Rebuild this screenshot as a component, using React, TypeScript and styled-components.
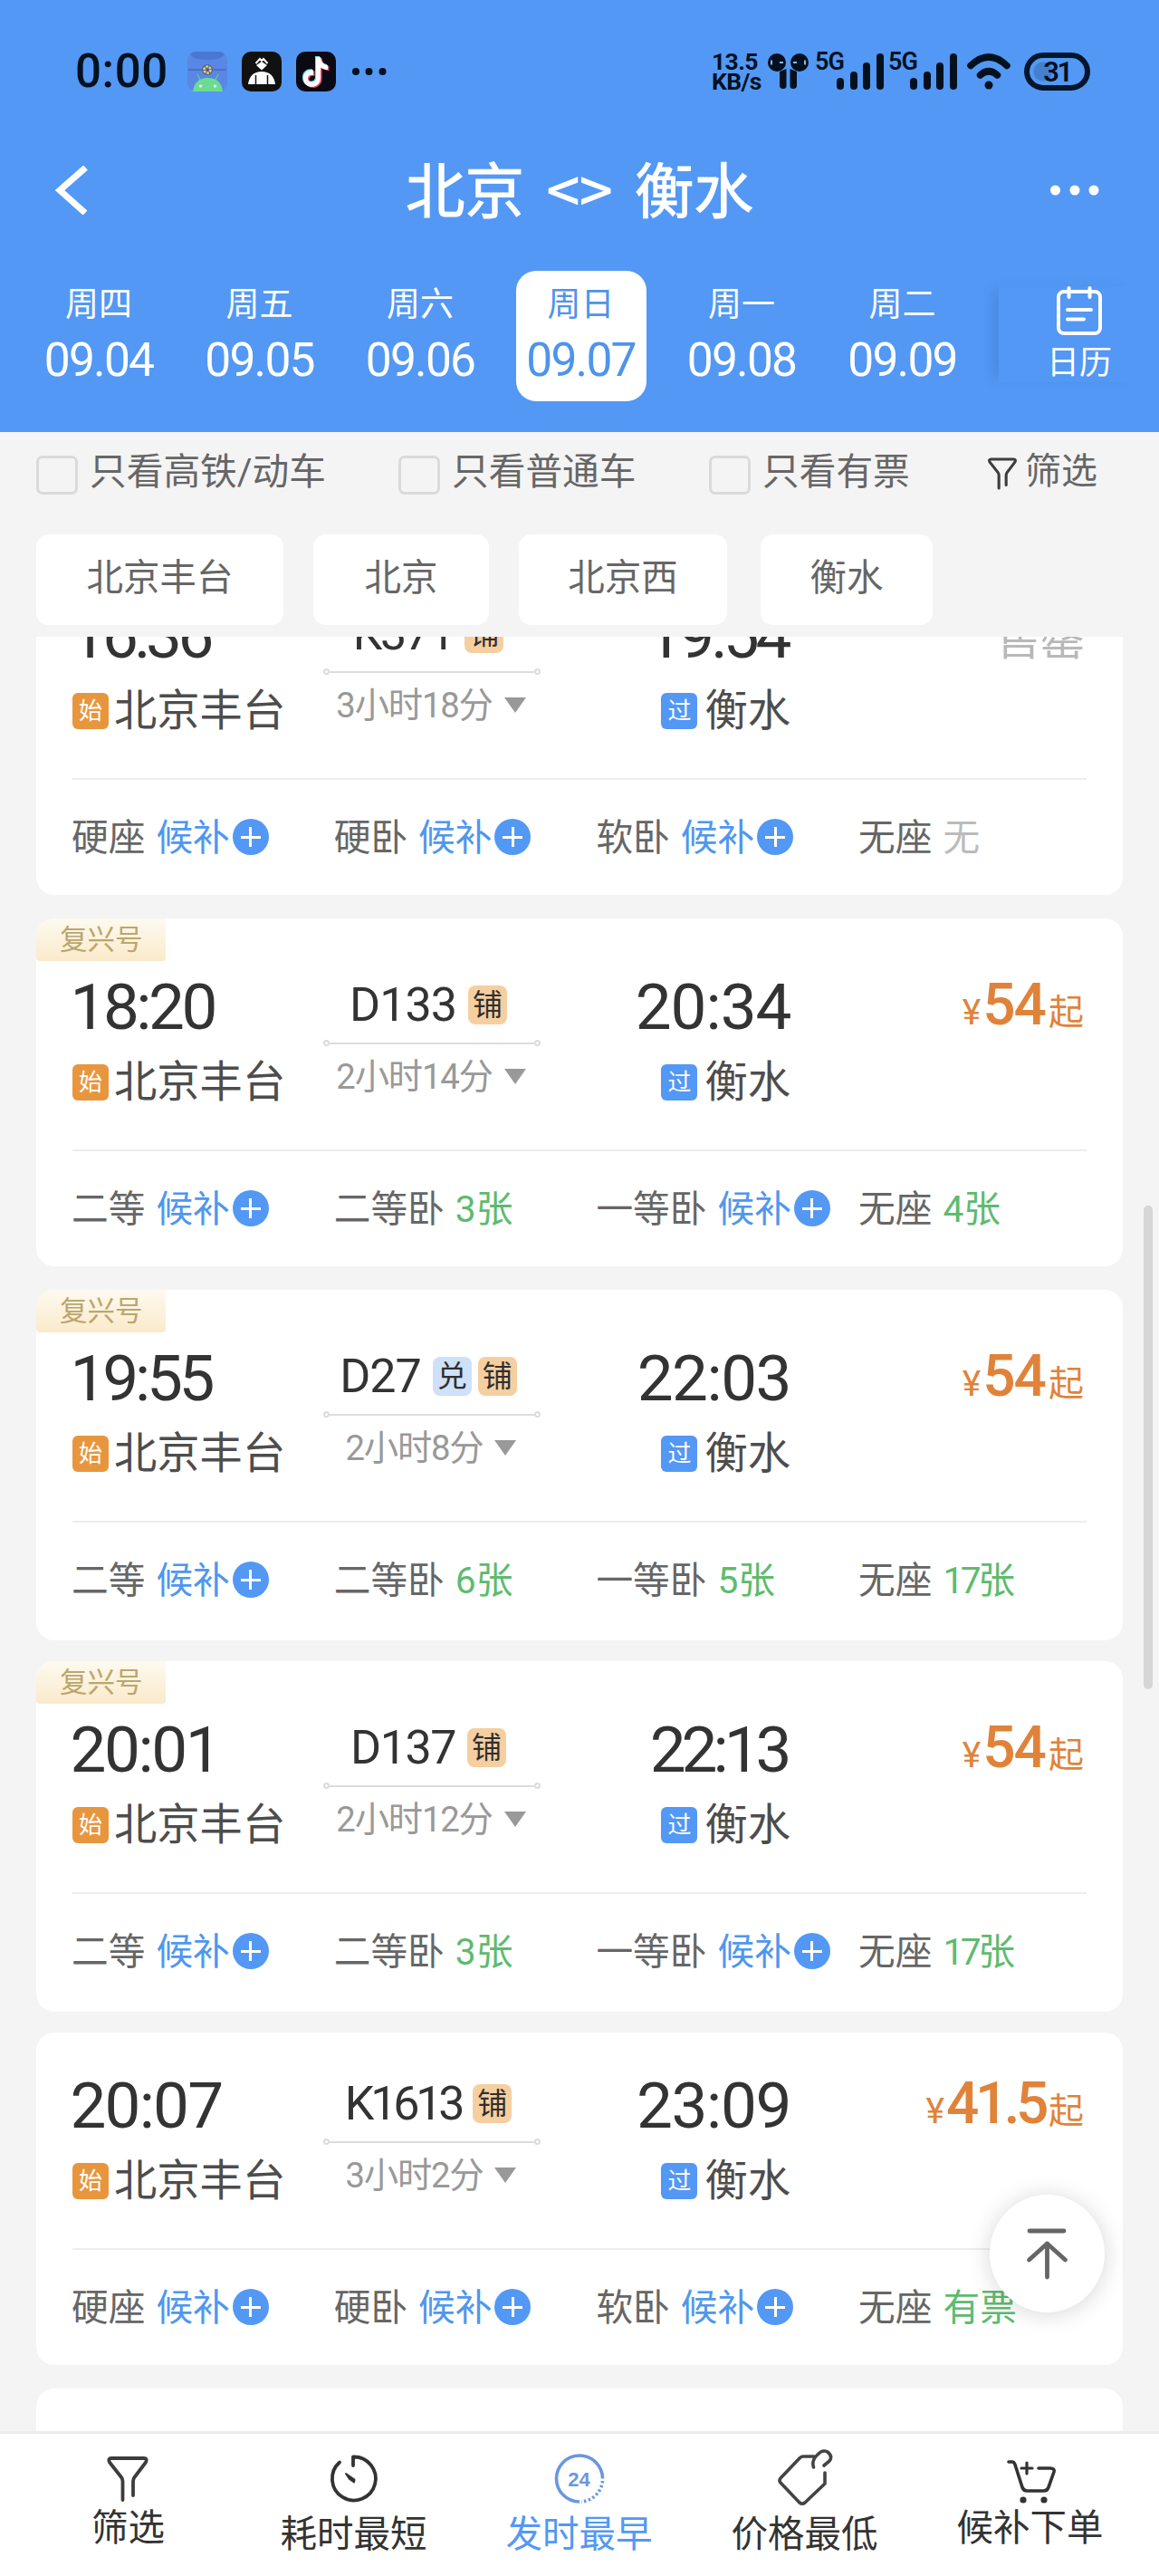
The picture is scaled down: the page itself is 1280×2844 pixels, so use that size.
import React from "react";
import styled, { createGlobalStyle } from "styled-components";

const BLUE = "#5398f4";
const GREEN = "#5dbb6e";

const GlobalStyle = createGlobalStyle`
  * { box-sizing: border-box; }
  body {
    margin: 0;
    background: #f4f4f4;
    font-family: Roboto, "Noto Sans CJK SC", sans-serif;
    color: #333;
  }
  svg { display: block; flex: none; }
`;

const Screen = styled.div`
  position: relative;
  width: 1280px;
  height: 2844px;
  overflow: hidden;
  display: flex;
  flex-direction: column;
  white-space: nowrap;
`;

/* ---------- header ---------- */

const Header = styled.header`
  height: 477px;
  flex: none;
  background: ${BLUE};
  color: #fff;
  display: flex;
  flex-direction: column;
`;

const StatusBar = styled.div`
  height: 156px;
  padding: 2px 76px 0 83px;
  display: flex;
  align-items: center;
  justify-content: space-between;
  color: #03111f;
`;

const StatusGroup = styled.div`
  display: flex;
  align-items: center;
`;

const Clock = styled.span`
  width: 124px;
  font-size: 51px;
  line-height: 60px;
  font-weight: 500;
  letter-spacing: 0.6px;
`;

const AppIcons = styled.div`
  display: flex;
  gap: 16px;
  margin-right: 18px;
`;

const NetSpeed = styled.div`
  display: flex;
  flex-direction: column;
  width: 62px;
  font-size: 26.5px;
  line-height: 22px;
  font-weight: 700;
  letter-spacing: -0.6px;
`;

const Network = styled.div`
  display: flex;
  width: 81px;
  height: 42px;
  align-items: flex-start;
`;

const NetworkLabel = styled.span`
  width: 24px;
  font-size: 27px;
  line-height: 21px;
  font-weight: 600;
  letter-spacing: -1px;
`;

const SignalBars = styled.div`
  display: flex;
  align-items: flex-end;
  gap: 6.5px;
  height: 41px;
`;

const SignalBar = styled.i<{ $h: number }>`
  width: 8px;
  height: ${(p) => p.$h}px;
  border-radius: 4px;
  background: #03111f;
`;

const Battery = styled.div`
  width: 73px;
  height: 42px;
  margin-left: 13px;
  border: 6px solid #03162b;
  border-radius: 21px;
  display: flex;
  align-items: center;
  justify-content: center;
  background: radial-gradient(circle at 15px 15px, #447fd0 10px, transparent 11px);
  font-size: 31px;
  font-weight: 600;
  letter-spacing: -2.5px;
`;

const TitleBar = styled.div`
  height: 108px;
  padding: 0 66px 0 60px;
  display: flex;
  align-items: center;
  justify-content: space-between;
`;

const Title = styled.h1`
  margin: -7px 0 0 20px;
  font-family: "Noto Sans CJK SC", sans-serif;
  font-size: 65.5px;
  line-height: 101px;
  font-weight: 400;
  word-spacing: 10px;
  -webkit-text-stroke: 1px #fff;
`;

const DateBar = styled.div`
  display: flex;
  padding: 35px 0 0 37px;
`;

const DateItem = styled.div<{ $active?: boolean }>`
  width: 144px;
  height: 144px;
  margin-right: 33.5px;
  padding-top: 12.5px;
  border-radius: 22px;
  background: ${(p) => (p.$active ? "#fff" : "transparent")};
  color: ${(p) => (p.$active ? "#4f94ea" : "#fff")};
  display: flex;
  flex-direction: column;
  align-items: center;
  gap: 11px;
`;

const WeekDay = styled.span`
  font-size: 37px;
  line-height: 50px;
`;

const DayNumber = styled.span`
  font-size: 51.5px;
  line-height: 50px;
  letter-spacing: -1.8px;
`;

const CalendarButton = styled.div`
  width: 152px;
  height: 106px;
  margin: 17px 0 0 1px;
  padding: 0 0 0 26px;
  background: ${BLUE};
  box-shadow: -11px 0 13px -5px rgba(40, 80, 170, 0.22);
  display: flex;
  flex-direction: column;
  align-items: center;
  font-size: 36px;
  line-height: 42px;
  gap: 8px;
`;

/* ---------- filters ---------- */

const Filters = styled.div`
  height: 113px;
  padding: 0 68px 0 40px;
  display: grid;
  grid-template-columns: 400px 343px 1fr auto;
`;

const FilterOption = styled.label`
  display: flex;
  height: 94px;
  align-items: center;
  gap: 13px;
  font-size: 40.7px;
  color: #666;
`;

const CheckBox = styled.i`
  width: 46px;
  height: 43px;
  border: 3px solid #dadada;
  border-radius: 7px;
`;

const FilterButton = styled.div`
  display: flex;
  height: 94px;
  align-items: center;
  gap: 9px;
  font-size: 40px;
  color: #666;

  svg {
    margin-bottom: 2px;
  }
`;

const FilterText = styled.span`
  line-height: 60px;
  margin-bottom: 6px;
`;

const Chips = styled.div`
  height: 113px;
  padding-left: 40px;
  display: flex;
`;

const Chip = styled.div<{ $w: number; $gap: number }>`
  width: ${(p) => p.$w}px;
  height: 100px;
  margin-right: ${(p) => p.$gap}px;
  border-radius: 14px;
  background: #fff;
  color: #666;
  font-size: 40.5px;
  line-height: 97px;
  text-align: center;
`;

/* ---------- train list ---------- */

const Viewport = styled.main`
  flex: 1;
  overflow: hidden;
  padding: 0 40px;
`;

const List = styled.div`
  margin-top: -82px;
  display: flex;
  flex-direction: column;
`;

const Card = styled.article<{ $labelled: boolean; $h?: number }>`
  position: relative;
  flex: none;
  height: ${(p) => p.$h ?? 367}px;
  margin-bottom: ${(p) => (p.$h === 387 ? 23 : 26)}px;
  padding: ${(p) => (p.$labelled ? 17 : 0)}px 40px 0;
  border-radius: 20px;
  background: #fff;
  overflow: hidden;
`;

const Ribbon = styled.div`
  position: absolute;
  left: 0;
  top: 0;
  width: 143px;
  height: 47px;
  padding-left: 26px;
  border-radius: 20px 0 4px 4px;
  background: linear-gradient(#fdfaf0, #faeaca);
  color: #bba66d;
  font-size: 30.5px;
  line-height: 47px;
`;

const Summary = styled.div`
  height: 240px;
  display: grid;
  grid-template-columns: 277px 240px 276px 1fr;
  border-bottom: 2px solid #ededed;
`;

const Stop = styled.div<{ $end?: boolean }>`
  display: flex;
  flex-direction: column;
  align-items: ${(p) => (p.$end ? "flex-end" : "flex-start")};
  padding-top: 50.5px;
  gap: 27px;
`;

const Time = styled.span<{ $track: number }>`
  margin: 0 ${(p) => -p.$track - 1.5}px 0 -2.5px;
  font-size: 71px;
  line-height: 60px;
  letter-spacing: ${(p) => p.$track}px;
`;

const Station = styled.div`
  display: flex;
  align-items: center;
  gap: 6px;
  font-size: 47.3px;
  line-height: 52px;
  color: #4d4d4d;
`;

const StopMark = styled.i<{ $pass?: boolean }>`
  width: 40px;
  height: 40px;
  margin: 1px ${(p) => (p.$pass ? 2 : 0)}px 0 0;
  border-radius: 6px;
  background: ${(p) => (p.$pass ? BLUE : "#e8963e")};
  color: #fff;
  font-size: 26px;
  line-height: 40px;
  font-style: normal;
  text-align: center;
`;

const Route = styled.div`
  display: flex;
  flex-direction: column;
  align-items: center;
  padding-top: 56px;
`;

const TrainNo = styled.div<{ $track: number }>`
  display: flex;
  align-items: center;
  gap: 7px;
  height: 44px;
  margin-right: 8px;
  font-size: 52px;
  letter-spacing: ${(p) => p.$track}px;
`;

const TrainName = styled.span`
  margin-right: 6px;
`;

const Tag = styled.i<{ $kind: string }>`
  width: 43px;
  height: 43px;
  border-radius: 8px;
  background: ${(p) => (p.$kind === "兑" ? "#cfe1f9" : "#f6cfa0")};
  color: #2f2f2f;
  font-size: 33px;
  line-height: 43px;
  font-style: normal;
  letter-spacing: 0;
  text-align: center;
`;

const Track = styled.div`
  width: 240px;
  height: 7px;
  margin: 17px 0 9px;
  display: flex;
  align-items: center;
`;

const TrackDot = styled.i`
  width: 7px;
  height: 7px;
  border: 2px solid #dcdcdc;
  border-radius: 50%;
`;

const TrackLine = styled.i`
  flex: 1;
  height: 2px;
  background: #dcdcdc;
`;

const Duration = styled.div`
  display: flex;
  align-items: center;
  gap: 13px;
  height: 42px;
  margin-right: 2px;
  font-size: 38.3px;
  letter-spacing: -1.2px;
  color: #999;
`;

const Caret = styled.i`
  border: 12.5px solid transparent;
  border-top: 17px solid #999;
  border-bottom: 0;
  margin-top: 6px;
`;

const Price = styled.div`
  display: flex;
  justify-content: flex-end;
  align-items: baseline;
  height: 60px;
  margin-top: 49px;
  padding-right: 3px;
  color: #e0833a;
  line-height: 60px;
`;

const PriceUnit = styled.span`
  font-size: 39px;
`;

const PriceValue = styled.span<{ $track: number }>`
  margin: 0 4px 0 2px;
  font-size: 64px;
  font-weight: 500;
  letter-spacing: ${(p) => p.$track}px;
`;

const SoldOut = styled.div`
  margin-top: 56px;
  padding-right: 2px;
  font-size: 49px;
  line-height: 60px;
  color: #b8b8b8;
  text-align: right;
`;

const Seats = styled.div`
  display: grid;
  grid-template-columns: repeat(4, 289.7px);
  height: 124px;
  padding-bottom: 4px;
  margin-left: -1px;
`;

const Seat = styled.div`
  display: flex;
  align-items: center;
  gap: 12px;
  font-size: 40.7px;
  color: #666;
`;

const SeatState = styled.span<{ $c: string; $tight: boolean }>`
  display: flex;
  align-items: center;
  gap: 3px;
  color: ${(p) => p.$c};
  letter-spacing: ${(p) => (p.$tight ? -3.5 : 0)}px;
`;

const Plus = styled.i`
  width: 40px;
  height: 40px;
  margin-top: 6px;
  border-radius: 50%;
  background:
    linear-gradient(#fff, #fff) center / 22px 3px no-repeat,
    linear-gradient(#fff, #fff) center / 3px 22px no-repeat,
    ${BLUE};
`;

/* ---------- overlays and bottom bar ---------- */

const ScrollThumb = styled.div`
  position: absolute;
  left: 1263px;
  top: 1331px;
  width: 10px;
  height: 534px;
  border-radius: 5px;
  background: #d6d6d6;
`;

const TopButton = styled.button`
  position: absolute;
  left: 1093px;
  top: 2423px;
  width: 127px;
  height: 130px;
  border: 0;
  padding: 0;
  border-radius: 50%;
  background: #fff;
  box-shadow: 0 2px 26px rgba(0, 0, 0, 0.16);
`;

const BottomBar = styled.nav`
  flex: none;
  height: 160px;
  padding: 0 17px;
  border-top: 3px solid #ececec;
  background: #fff;
  display: grid;
  grid-template-columns: repeat(5, 249px);
`;

const Tab = styled.div<{ $active?: boolean; $drop: number }>`
  display: flex;
  flex-direction: column;
  align-items: center;
  padding-top: 16px;
  font-size: 40.5px;
  line-height: 50px;
  color: ${(p) => (p.$active ? "#5398f4" : "#333")};

  > svg {
    margin-bottom: ${(p) => p.$drop}px;
  }
`;

type SeatInfo = [string, string];
type Train = {
  label?: boolean;
  height?: number;
  dep: string;
  depTrack: number;
  arr: string;
  arrTrack: number;
  no: string;
  noTrack?: number;
  tags: string[];
  duration: string;
  price?: string;
  seats: SeatInfo[];
};

const trains: Train[] = [
  {
    dep: "16:36", depTrack: -4.5, arr: "19:54", arrTrack: -4, no: "K371", noTrack: -2.5, tags: ["铺"], duration: "3小时18分",
    seats: [["硬座", "候补"], ["硬卧", "候补"], ["软卧", "候补"], ["无座", "无"]],
  },
  {
    label: true, height: 384, dep: "18:20", depTrack: -3.5, arr: "20:34", arrTrack: -1, no: "D133", tags: ["铺"], duration: "2小时14分", price: "54",
    seats: [["二等", "候补"], ["二等卧", "3张"], ["一等卧", "候补"], ["无座", "4张"]],
  },
  {
    label: true, height: 387, dep: "19:55", depTrack: -4.2, arr: "22:03", arrTrack: -1.5, no: "D27", tags: ["兑", "铺"], duration: "2小时8分", price: "54",
    seats: [["二等", "候补"], ["二等卧", "6张"], ["一等卧", "5张"], ["无座", "17张"]],
  },
  {
    label: true, height: 387, dep: "20:01", depTrack: -2.4, arr: "22:13", arrTrack: -5, no: "D137", noTrack: -1.5, tags: ["铺"], duration: "2小时12分", price: "54",
    seats: [["二等", "候补"], ["二等卧", "3张"], ["一等卧", "候补"], ["无座", "17张"]],
  },
  {
    dep: "20:07", depTrack: -1.8, arr: "23:09", arrTrack: -1.3, no: "K1613", noTrack: -4.2, tags: ["铺"], duration: "3小时2分", price: "41.5",
    seats: [["硬座", "候补"], ["硬卧", "候补"], ["软卧", "候补"], ["无座", "有票"]],
  },
];

const days: [string, string][] = [
  ["周四", "09.04"], ["周五", "09.05"], ["周六", "09.06"],
  ["周日", "09.07"], ["周一", "09.08"], ["周二", "09.09"],
];

const stateColor = (s: string) => (s === "候补" ? "#4f97ee" : s === "无" ? "#bbb" : GREEN);

const TrainCard = ({ t }: { t: Train }) => (
  <Card $labelled={!!t.label} $h={t.height}>
    {t.label && <Ribbon>复兴号</Ribbon>}
    <Summary>
      <Stop>
        <Time $track={t.depTrack}>{t.dep}</Time>
        <Station><StopMark>始</StopMark>北京丰台</Station>
      </Stop>
      <Route>
        <TrainNo $track={t.noTrack ?? -1}>
          <TrainName>{t.no}</TrainName>
          {t.tags.map((g) => <Tag key={g} $kind={g}>{g}</Tag>)}
        </TrainNo>
        <Track><TrackDot /><TrackLine /><TrackDot /></Track>
        <Duration>{t.duration}<Caret /></Duration>
      </Route>
      <Stop $end>
        <Time $track={t.arrTrack}>{t.arr}</Time>
        <Station><StopMark $pass>过</StopMark>衡水</Station>
      </Stop>
      {t.price ? (
        <Price>
          <PriceUnit>¥</PriceUnit>
          <PriceValue $track={t.price.includes(".") ? -4.5 : -2}>{t.price}</PriceValue>
          <PriceUnit>起</PriceUnit>
        </Price>
      ) : (
        <SoldOut>售罄</SoldOut>
      )}
    </Summary>
    <Seats>
      {t.seats.map(([name, state]) => (
        <Seat key={name}>
          {name}
          <SeatState $c={stateColor(state)} $tight={state.startsWith("1")}>
            {state}
            {state === "候补" && <Plus />}
          </SeatState>
        </Seat>
      ))}
    </Seats>
  </Card>
);

const Bars = () => (
  <SignalBars>
    {[13, 20, 30, 40].map((h) => <SignalBar key={h} $h={h} />)}
  </SignalBars>
);

const Funnel = ({ w, h, s }: { w: number; h: number; s: number }) => (
  <svg width={w} height={h} viewBox="0 0 46 50" fill="none" stroke="#3d3d3d" strokeWidth={s} strokeLinecap="round" strokeLinejoin="round">
    <path d="M17.5 48V27.5Q17.5 25 16 23L3 6.500Q1 2 5 2H41Q45 2 43 6.500L30.500 23Q29 25 29 27.500V43" />
  </svg>
);

const PixelDroid = () => (
  <svg width="44" height="44" viewBox="0 0 44 44">
    <rect width="44" height="44" rx="10" fill="#5a86e4" />
    <path d="M3 3Q5 0 10 0H34Q39 0 41 3Q37 9 22 9Q7 9 3 3Z" fill="#4a76d4" />
    <path d="M1 20H43" stroke="#4a70c8" strokeWidth="2" />
    <circle cx="22" cy="20" r="6" fill="#55648f" />
    <circle cx="22" cy="20" r="3.500" fill="none" stroke="#e5d267" strokeWidth="2.500" strokeDasharray="2.600 1" />
    <path d="M14 31L11 25M31 31L34 25" stroke="#62c98b" strokeWidth="1.500" />
    <path d="M6 44Q8 29 22.500 29T39 44Z" fill="#6bdc91" />
    <circle cx="14.500" cy="38" r="1.500" fill="#fff" />
    <circle cx="30.500" cy="38" r="1.500" fill="#fff" />
  </svg>
);

const FigureApp = () => (
  <svg width="44" height="44" viewBox="0 0 44 44">
    <rect width="44" height="44" rx="10" fill="#111" />
    <path d="M22 11L28 15L22 20.500L16 15Z" fill="#fff" />
    <path d="M15.500 13L20 8L22 10L24 8L28.500 13" fill="none" stroke="#fff" strokeWidth="2" />
    <path d="M7 36Q9 22 22 22T37 36Z" fill="#fff" />
    <path d="M15.500 36V26M28.500 36V26" stroke="#111" strokeWidth="1.500" />
  </svg>
);

const NOTE = "M22 6H27C27.500 11 30 14 35 15V20C32 20 29.500 19 27 17.500V29C27 42 8 42 8 29.500C8 23 13 19.500 19 20.500V26C15.500 25 13 27 13 29.500C13 35 22 35 22 29Z";

const NoteApp = () => (
  <svg width="44" height="44" viewBox="0 0 44 44">
    <rect width="44" height="44" rx="10" fill="#0a0a14" />
    <path d={NOTE} fill="#5fe6e2" transform="translate(-1 -1)" />
    <path d={NOTE} fill="#ee4a62" transform="translate(1.500 1)" />
    <path d={NOTE} fill="#fff" />
  </svg>
);

export default function App() {
  return (
    <Screen>
      <GlobalStyle />
      <Header>
        <StatusBar>
          <StatusGroup>
            <Clock>0:00</Clock>
            <AppIcons>
              <PixelDroid />
              <FigureApp />
              <NoteApp />
            </AppIcons>
            <svg width="40" height="10" viewBox="0 0 40 10" fill="#03111f">
              <circle cx="4" cy="5" r="4" /><circle cx="18.500" cy="5" r="4" /><circle cx="33.500" cy="5" r="4" />
            </svg>
          </StatusGroup>
          <StatusGroup>
            <NetSpeed><span>13.5</span><span>KB/s</span></NetSpeed>
            <svg width="52" height="40" viewBox="0 0 52 40" fill="#03111f">
              <circle cx="10" cy="10" r="10" /><circle cx="35" cy="10" r="10" />
              <path d="M13 20L20.500 17V36Q20.500 39 17 39T13 36Z M32 20L24.500 17V36Q24.500 39 28 39T32 36Z" />
              <path d="M4 7.500V12.500M41 7.500V12.500M13 10H17M28 10H32" stroke="#8ab6ee" strokeWidth="2" />
            </svg>
            <Network><NetworkLabel>5G</NetworkLabel><Bars /></Network>
            <Network><NetworkLabel>5G</NetworkLabel><Bars /></Network>
            <svg width="56" height="40" viewBox="0 0 56 40" fill="none" stroke="#03111f" strokeWidth="7.500" strokeLinecap="round">
              <path d="M10 13.500Q30 -5.500 50 13.500M20.500 24Q30 15.500 39.500 24" />
              <circle cx="30" cy="35" r="4.500" fill="#03111f" stroke="none" />
            </svg>
            <Battery>31</Battery>
          </StatusGroup>
        </StatusBar>

        <TitleBar>
          <svg width="40" height="54" viewBox="0 0 40 54" fill="none" stroke="#fff" strokeWidth="7">
            <path d="M34.500 2L6 27L34 52" />
          </svg>
          <Title>北京 &lt;&gt; 衡水</Title>
          <svg width="54" height="12" viewBox="0 0 54 12" fill="#fff">
            <circle cx="5.500" cy="6" r="5.500" /><circle cx="27" cy="6" r="5.500" /><circle cx="48" cy="6" r="5.500" />
          </svg>
        </TitleBar>

        <DateBar>
          {days.map(([w, d]) => (
            <DateItem key={d} $active={d === "09.07"}>
              <WeekDay>{w}</WeekDay>
              <DayNumber>{d}</DayNumber>
            </DateItem>
          ))}
          <CalendarButton>
            <svg width="52" height="56" viewBox="0 0 52 56" fill="none" stroke="#fff" strokeWidth="4" strokeLinecap="round">
              <rect x="3" y="6" width="46" height="46" rx="6" />
              <path d="M14.500 2V12M37.500 2V12M13 26H39M13 36.500H31" />
            </svg>
            日历
          </CalendarButton>
        </DateBar>
      </Header>

      <Filters>
        {["只看高铁/动车", "只看普通车", "只看有票"].map((f) => (
          <FilterOption key={f}><CheckBox /><FilterText>{f}</FilterText></FilterOption>
        ))}
        <FilterButton>
          <Funnel w={32} h={36} s={4.5} />
          <FilterText>筛选</FilterText>
        </FilterButton>
      </Filters>

      <Chips>
        <Chip $w={273} $gap={33}>北京丰台</Chip>
        <Chip $w={194} $gap={33}>北京</Chip>
        <Chip $w={230} $gap={37}>北京西</Chip>
        <Chip $w={190} $gap={0}>衡水</Chip>
      </Chips>

      <Viewport>
        <List>
          {trains.map((t) => <TrainCard key={t.no} t={t} />)}
          <Card $labelled={false} />
        </List>
      </Viewport>

      <BottomBar>
        <Tab $drop={-5}>
          <svg width="56" height="68" viewBox="0 -7 56 68" fill="none">
            <g transform="translate(4 2)"><Funnel w={46} h={50} s={3.8} /></g>
          </svg>
          筛选
        </Tab>
        <Tab $drop={2}>
          <svg width="62" height="68" viewBox="0 0 62 68" fill="none" stroke="#333" strokeWidth="3.800" strokeLinecap="round" strokeLinejoin="round">
            <path d="M15 15.500A24 24 0 1 0 30 9.500V19" />
            <path d="M22 28L26 34L31 37.500L31.500 34.500Z" fill="#333" strokeWidth="2" />
          </svg>
          耗时最短
        </Tab>
        <Tab $active $drop={2}>
          <svg width="60" height="68" viewBox="0 0 60 68" fill="none" stroke="#6a97e2" strokeWidth="3.600">
            <path d="M30 59A25.500 25.500 0 1 1 55.500 33.500" />
            <path d="M55.500 36A25.500 25.500 0 0 1 32 59" strokeDasharray="2.500 2.500" />
            <text x="29.500" y="41.500" fill="#6a97e2" stroke="none" fontFamily="Liberation Sans, sans-serif" fontSize="22" fontWeight="700" textAnchor="middle">24</text>
          </svg>
          发时最早
        </Tab>
        <Tab $drop={2}>
          <svg width="64" height="68" viewBox="0 0 64 68" fill="none" stroke="#444" strokeWidth="3.600" strokeLinecap="round" strokeLinejoin="round">
            <path d="M42 9H30Q28 9 26.500 10.500L5 33Q3 35.500 5 38L26 60Q29 62.500 32 60L54 39V27" />
            <path d="M41.500 21Q39 13 46 7Q51 1 57 4Q63 9 59 14L53 19" />
          </svg>
          价格最低
        </Tab>
        <Tab $drop={-5}>
          <svg width="60" height="68" viewBox="0 0 60 68" fill="none" stroke="#333" strokeWidth="3.600" strokeLinecap="round" strokeLinejoin="round">
            <path d="M6 15H10Q12 15 13 18L21 43Q22.500 47 26 47H45Q48.500 47 50 43L56 26Q57 22 52 22H39" />
            <path d="M26 16V28M20 22H32" strokeWidth="3.200" />
            <circle cx="22" cy="57" r="1.800" fill="#333" /><circle cx="45" cy="57" r="1.800" fill="#333" />
          </svg>
          候补下单
        </Tab>
      </BottomBar>

      <ScrollThumb />
      <TopButton>
        <svg width="127" height="130" viewBox="0 0 127 130" fill="none" stroke="#666" strokeWidth="4.800" strokeLinecap="round" strokeLinejoin="round">
          <path d="M44 40H82M63.500 91V54M43.500 72L63.500 54L83.500 72" />
        </svg>
      </TopButton>
    </Screen>
  );
}
